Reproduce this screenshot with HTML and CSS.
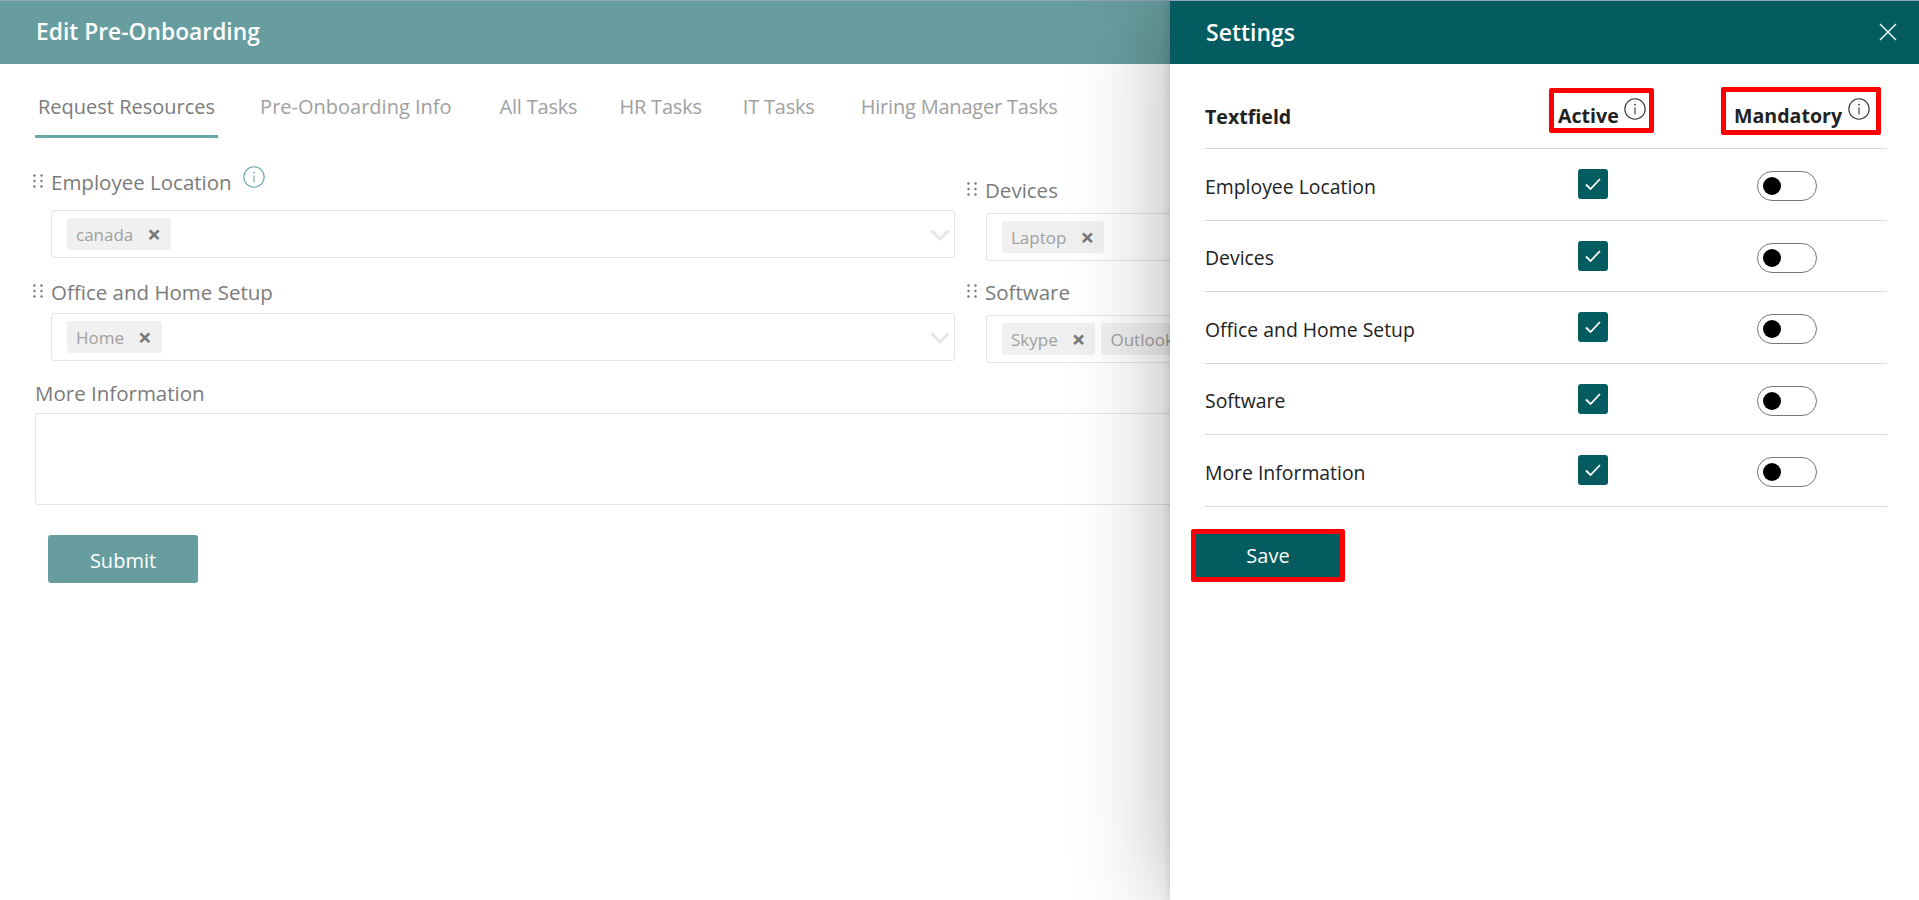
FILE: index.html
```html
<!DOCTYPE html>
<html lang="en">
<head>
    <meta charset="UTF-8">
    <meta name="viewport" content="width=device-width, initial-scale=1.0">
    <title>Edit Pre-Onboarding</title>
    <link rel="stylesheet" href="styles.css">
</head>
<body>
    <div class="page">
        <header class="page-header">Edit Pre-Onboarding</header>

        <nav class="tabs">
            <a class="tab active">Request Resources</a>
            <a class="tab">Pre-Onboarding Info</a>
            <a class="tab">All Tasks</a>
            <a class="tab">HR Tasks</a>
            <a class="tab">IT Tasks</a>
            <a class="tab">Hiring Manager Tasks</a>
        </nav>

        <div class="fields">
            <div class="field-col left-col">
                <div class="field">
                    <div class="field-label with-info">
                        <svg class="dots" viewBox="0 0 10 14"><g fill="#777"><circle cx="1.5" cy="1.5" r="1.2"/><circle cx="8.5" cy="1.5" r="1.2"/><circle cx="1.5" cy="7" r="1.2"/><circle cx="8.5" cy="7" r="1.2"/><circle cx="1.5" cy="12.5" r="1.2"/><circle cx="8.5" cy="12.5" r="1.2"/></g></svg>
                        <span>Employee Location</span>
                        <svg class="info info-teal" viewBox="0 0 22 22"><circle cx="11" cy="11" r="10.2" fill="none" stroke="currentColor" stroke-width="1.1"/><circle cx="11" cy="6.6" r="0.9" fill="currentColor"/><path d="M11 9.5v7" stroke="currentColor" stroke-width="1.1"/></svg>
                    </div>
                    <div class="select">
                        <span class="tag">canada<b>×</b></span>
                        <svg class="chevron" viewBox="0 0 20 12"><path d="M1.5 1.5L10 10l8.5-8.5" fill="none" stroke="#e6e6e6" stroke-width="3"/></svg>
                    </div>
                </div>
                <div class="field">
                    <div class="field-label">
                        <svg class="dots" viewBox="0 0 10 14"><g fill="#777"><circle cx="1.5" cy="1.5" r="1.2"/><circle cx="8.5" cy="1.5" r="1.2"/><circle cx="1.5" cy="7" r="1.2"/><circle cx="8.5" cy="7" r="1.2"/><circle cx="1.5" cy="12.5" r="1.2"/><circle cx="8.5" cy="12.5" r="1.2"/></g></svg>
                        <span>Office and Home Setup</span>
                    </div>
                    <div class="select">
                        <span class="tag">Home<b>×</b></span>
                        <svg class="chevron" viewBox="0 0 20 12"><path d="M1.5 1.5L10 10l8.5-8.5" fill="none" stroke="#e6e6e6" stroke-width="3"/></svg>
                    </div>
                </div>
            </div>
            <div class="field-col right-col">
                <div class="field">
                    <div class="field-label">
                        <svg class="dots" viewBox="0 0 10 14"><g fill="#777"><circle cx="1.5" cy="1.5" r="1.2"/><circle cx="8.5" cy="1.5" r="1.2"/><circle cx="1.5" cy="7" r="1.2"/><circle cx="8.5" cy="7" r="1.2"/><circle cx="1.5" cy="12.5" r="1.2"/><circle cx="8.5" cy="12.5" r="1.2"/></g></svg>
                        <span>Devices</span>
                    </div>
                    <div class="select">
                        <span class="tag">Laptop<b>×</b></span>
                    </div>
                </div>
                <div class="field">
                    <div class="field-label">
                        <svg class="dots" viewBox="0 0 10 14"><g fill="#777"><circle cx="1.5" cy="1.5" r="1.2"/><circle cx="8.5" cy="1.5" r="1.2"/><circle cx="1.5" cy="7" r="1.2"/><circle cx="8.5" cy="7" r="1.2"/><circle cx="1.5" cy="12.5" r="1.2"/><circle cx="8.5" cy="12.5" r="1.2"/></g></svg>
                        <span>Software</span>
                    </div>
                    <div class="select">
                        <span class="tag">Skype<b>×</b></span>
                        <span class="tag">Outlook<b>×</b></span>
                    </div>
                </div>
            </div>
        </div>

        <div class="more-info">
            <label>More Information</label>
            <div class="textarea"></div>
        </div>

        <button class="submit-btn">Submit</button>
    </div>

    <aside class="settings-panel">
        <div class="settings-header">
            <span>Settings</span>
            <svg class="close" viewBox="0 0 18 18"><path d="M1 1l16 16M17 1L1 17" stroke="#fff" stroke-width="1.4" fill="none"/></svg>
        </div>
        <div class="settings-body">
            <div class="settings-row head-row">
                <div class="field-name">Textfield</div>
                <div class="col-active"><span class="mark mark-active">Active<svg class="info" viewBox="0 0 22 22"><circle cx="11" cy="11" r="10.2" fill="none" stroke="currentColor" stroke-width="1.1"/><circle cx="11" cy="6.6" r="0.9" fill="currentColor"/><path d="M11 9.5v7" stroke="currentColor" stroke-width="1.1"/></svg></span></div>
                <div class="col-mandatory"><span class="mark mark-mandatory">Mandatory<svg class="info" viewBox="0 0 22 22"><circle cx="11" cy="11" r="10.2" fill="none" stroke="currentColor" stroke-width="1.1"/><circle cx="11" cy="6.6" r="0.9" fill="currentColor"/><path d="M11 9.5v7" stroke="currentColor" stroke-width="1.1"/></svg></span></div>
            </div>
            <div class="settings-row">
                <div class="field-name">Employee Location</div>
                <div class="col-active"><span class="checkbox"><svg viewBox="0 0 16 12"><path d="M1 6.5L5.5 11 15 1" fill="none" stroke="#fff" stroke-width="1.8"/></svg></span></div>
                <div class="col-mandatory"><span class="toggle"><i></i></span></div>
            </div>
            <div class="settings-row">
                <div class="field-name">Devices</div>
                <div class="col-active"><span class="checkbox"><svg viewBox="0 0 16 12"><path d="M1 6.5L5.5 11 15 1" fill="none" stroke="#fff" stroke-width="1.8"/></svg></span></div>
                <div class="col-mandatory"><span class="toggle"><i></i></span></div>
            </div>
            <div class="settings-row">
                <div class="field-name">Office and Home Setup</div>
                <div class="col-active"><span class="checkbox"><svg viewBox="0 0 16 12"><path d="M1 6.5L5.5 11 15 1" fill="none" stroke="#fff" stroke-width="1.8"/></svg></span></div>
                <div class="col-mandatory"><span class="toggle"><i></i></span></div>
            </div>
            <div class="settings-row">
                <div class="field-name">Software</div>
                <div class="col-active"><span class="checkbox"><svg viewBox="0 0 16 12"><path d="M1 6.5L5.5 11 15 1" fill="none" stroke="#fff" stroke-width="1.8"/></svg></span></div>
                <div class="col-mandatory"><span class="toggle"><i></i></span></div>
            </div>
            <div class="settings-row">
                <div class="field-name">More Information</div>
                <div class="col-active"><span class="checkbox"><svg viewBox="0 0 16 12"><path d="M1 6.5L5.5 11 15 1" fill="none" stroke="#fff" stroke-width="1.8"/></svg></span></div>
                <div class="col-mandatory"><span class="toggle"><i></i></span></div>
            </div>
            <button class="save-btn">Save</button>
        </div>
    </aside>
</body>
</html>
```

FILE: styles.css
```css
* {
    box-sizing: border-box;
}
html, body {
    height: 100%;
}
body {
    margin: 0;
    font-family: "Open Sans", Arial, sans-serif;
    background-color: #ffffff;
    overflow: hidden;
}
svg {
    display: block;
}

/* page under the panel */
.page {
    height: 900px;
    overflow: hidden;
}
.page-header {
    height: 64px;
    padding-left: 36px;
    border-top: 1px solid #8fa6bd;
    background-color: #689d9f;
    color: #ffffff;
    font-size: 22.8px;
    font-weight: 600;
    line-height: 62px;
}
.tabs {
    display: flex;
    height: 74px;
    padding-left: 35px;
    font-size: 20px;
    line-height: 86px;
}
.tab {
    height: 74px;
    margin-right: 39px;
    padding: 0 3px;
    color: #a0a0a0;
}
.tab:nth-child(2) {
    margin-right: 42px;
}
.tab:nth-child(3) {
    margin-right: 36px;
    letter-spacing: -0.2px;
}
.tab:nth-child(4) {
    margin-right: 35px;
    letter-spacing: -0.2px;
}
.tab:nth-child(5) {
    margin-right: 40px;
    letter-spacing: -0.2px;
}
.tab:nth-child(6) {
    letter-spacing: -0.2px;
}
.tab.active {
    color: #7b7b7b;
    border-bottom: 3px solid #66a8a8;
}
.fields {
    display: flex;
    gap: 12px;
    padding-left: 33px;
}
.field-col {
    flex: none;
}
.left-col {
    width: 922px;
    padding-top: 29px;
}
.right-col {
    width: 900px;
    padding-top: 37px;
}
.field-label {
    display: flex;
    align-items: center;
    height: 30px;
    margin-bottom: 6px;
    color: #7b7b7b;
    font-size: 20.5px;
}
.field-label.with-info {
    margin-bottom: 13px;
}
.right-col .field-label {
    margin-bottom: 8px;
}
.dots {
    width: 10px;
    height: 14px;
    margin-right: 8px;
    margin-top: -2px;
}
.info {
    flex: none;
    width: 22px;
    height: 22px;
    color: #333333;
}
.info-teal {
    margin-left: 11px;
    margin-top: -10px;
    color: #66a8a8;
}
.select {
    position: relative;
    display: flex;
    align-items: center;
    gap: 6px;
    height: 48px;
    margin-left: 18px;
    margin-bottom: 19px;
    padding-left: 15px;
    border: 1px solid #e4e4e4;
    border-radius: 3px;
}
.right-col .select {
    margin-left: 19px;
    margin-bottom: 16px;
}
.tag {
    display: flex;
    align-items: center;
    height: 32px;
    padding: 0 10px 0 9px;
    border-radius: 3px;
    background-color: #f0f0f0;
    color: #a0a0a0;
    font-size: 17px;
}
.tag b {
    margin-left: 14px;
    color: #777777;
    font-size: 24px;
    font-weight: 700;
    line-height: 28px;
}
.chevron {
    position: absolute;
    right: 4px;
    top: 18px;
    width: 20px;
    height: 12px;
}
.more-info {
    padding-left: 35px;
}
.more-info label {
    display: block;
    height: 33px;
    color: #7b7b7b;
    font-size: 20.5px;
    line-height: 26px;
}
.textarea {
    width: 1850px;
    height: 92px;
    border: 1px solid #e4e4e4;
    border-radius: 3px;
}
.submit-btn {
    display: block;
    width: 150px;
    height: 48px;
    margin: 30px 0 0 48px;
    padding-top: 3px;
    border: none;
    border-radius: 3px;
    background-color: #689d9f;
    color: #ffffff;
    font-family: inherit;
    font-size: 20px;
}

/* settings panel */
.settings-panel {
    position: absolute;
    top: 0;
    right: 0;
    bottom: 0;
    width: 749px;
    background-color: #ffffff;
    box-shadow: 0 0 8px rgba(0, 0, 0, 0.15), 0 0 90px rgba(0, 0, 0, 0.32);
}
.settings-header {
    display: flex;
    align-items: center;
    justify-content: space-between;
    height: 64px;
    padding: 0 22px 2px 36px;
    border-top: 1px solid #8fa6bd;
    background-color: #045c60;
    color: #ffffff;
    font-size: 23px;
    font-weight: 600;
}
.close {
    width: 18px;
    height: 18px;
}
.settings-body {
    padding: 0 32px 0 35px;
}
.settings-row {
    display: grid;
    grid-template-columns: 373px 179px 1fr;
    align-items: center;
    height: 71.5px;
    border-bottom: 1px solid #d9d9d9;
    color: #222222;
    font-size: 19.4px;
}
.field-name {
    margin-top: 4px;
}
.head-row {
    align-items: start;
    height: 85px;
    padding-top: 24px;
    font-size: 19.6px;
    font-weight: 700;
}
.head-row .field-name {
    margin-top: 15px;
    line-height: 27px;
}
.col-active, .col-mandatory {
    display: flex;
}
.mark {
    display: flex;
    align-items: center;
    border: 5px solid #ff0000;
    border-radius: 2px;
}
.mark .info {
    margin-top: -13px;
}
.mark-active {
    width: 105px;
    height: 45px;
    margin-left: -29px;
    padding: 9px 0 0 4px;
    gap: 5px;
}
.mark-mandatory {
    width: 160px;
    height: 48px;
    margin-top: -1px;
    margin-left: -36px;
    padding: 8px 0 0 8px;
    gap: 6px;
}
.checkbox {
    display: flex;
    align-items: center;
    justify-content: center;
    width: 30px;
    height: 30px;
    border-radius: 3px;
    background-color: #045c60;
}
.checkbox svg {
    width: 16px;
    height: 12px;
}
.toggle {
    display: flex;
    align-items: center;
    width: 60px;
    height: 30px;
    margin-top: 4px;
    padding-left: 5px;
    border: 1px solid #777777;
    border-radius: 15px;
}
.toggle i {
    width: 18px;
    height: 18px;
    border-radius: 50%;
    background-color: #000000;
}
.save-btn {
    display: block;
    width: 154px;
    height: 53px;
    margin: 22px 0 0 -14px;
    border: 5px solid #ff0000;
    border-radius: 2px;
    background-color: #045c60;
    color: #ffffff;
    font-family: inherit;
    font-size: 20px;
}
```
